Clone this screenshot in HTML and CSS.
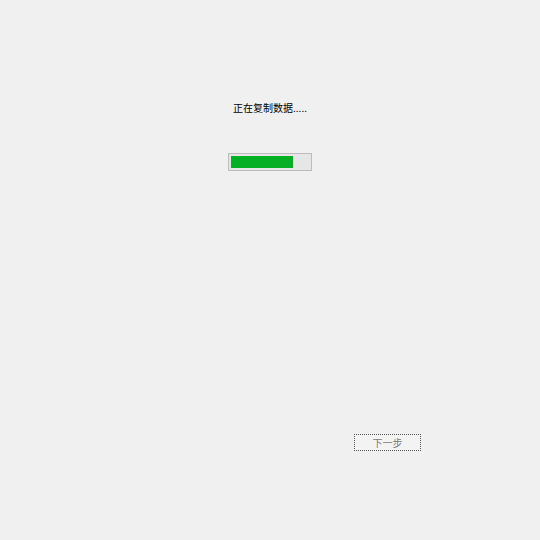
FILE: index.html
```html
<!DOCTYPE html>
<html lang="zh">
<head>
<meta charset="utf-8">
<link rel="stylesheet" href="styles.css">
</head>
<body>
<div class="main">
  <div class="label">正在复制数据.....</div>
  <div class="progress"><div class="fill" style="width:62px"></div></div>
  <button class="next">下一步</button>
</div>
</body>
</html>
```
FILE: styles.css
```css
html, body {
  margin: 0;
  padding: 0;
  background: #f0f0f0;
  width: 540px;
  height: 540px;
  overflow: hidden;
  font-family: "Noto Sans CJK SC", "Noto Sans", sans-serif;
}
.main {
  display: flex;
  flex-direction: column;
  align-items: center;
  padding-top: 102px;
}
.label {
  font-size: 10px;
  line-height: 12px;
  height: 12px;
  color: #000;
}
.progress {
  margin-top: 39px;
  width: 84px;
  height: 18px;
  box-sizing: border-box;
  border: 1px solid #bcbcbc;
  background: #e6e6e6;
  padding: 2px;
}
.fill {
  height: 12px;
  background: #06b025;
}
.next {
  align-self: flex-start;
  margin-top: 263px;
  margin-left: 354px;
  width: 67px;
  height: 17px;
  box-sizing: border-box;
  border: 1px dotted #555;
  background: #f3f3f3;
  color: #7a7a7a;
  font-family: "Noto Sans CJK SC", "Noto Sans", sans-serif;
  font-size: 10px;
  line-height: 15px;
  padding: 0;
}
```
